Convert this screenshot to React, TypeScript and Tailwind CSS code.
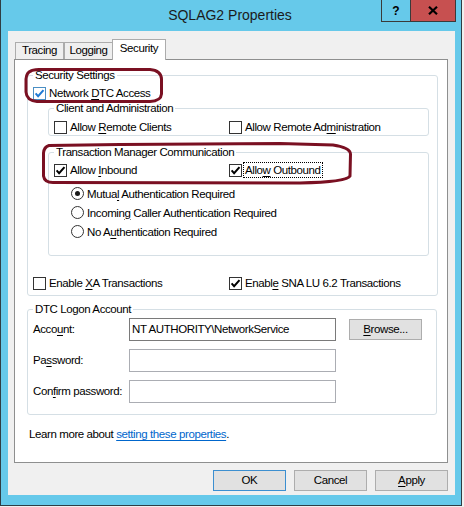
import React from "react";

const U = ({ children }: { children: React.ReactNode }) => (
  <span className="underline decoration-1 underline-offset-[2px]">{children}</span>
);

function CheckBox({ checked = false, hot = false }: { checked?: boolean; hot?: boolean }) {
  return (
    <span
      className={`flex h-[13px] w-[13px] shrink-0 items-center justify-center border bg-white ${
        hot ? "border-[#4a8fc4]" : "border-[#333333]"
      }`}
    >
      {checked && (
        <svg width="11" height="11" viewBox="0 0 11 11">
          <path
            d="M1.6 5.4L4.1 8.2L9.5 2.1"
            fill="none"
            stroke={hot ? "#1f7ad4" : "#000000"}
            strokeWidth="2"
          />
        </svg>
      )}
    </span>
  );
}

function Radio({ on = false }: { on?: boolean }) {
  return (
    <span className="flex h-[13px] w-[13px] shrink-0 items-center justify-center rounded-full border border-[#333333] bg-white">
      {on && <span className="h-[5px] w-[5px] rounded-full bg-[#1a1a1a]" />}
    </span>
  );
}

function Option({
  checked,
  hot,
  focus,
  children,
}: {
  checked?: boolean;
  hot?: boolean;
  focus?: boolean;
  children: React.ReactNode;
}) {
  return (
    <label className="flex h-[16px] items-center gap-[1px]">
      <CheckBox checked={checked} hot={hot} />
      <span
        className={`border px-[1px] leading-[14px] ${
          focus ? "border-dotted border-black" : "border-transparent"
        }`}
      >
        {children}
      </span>
    </label>
  );
}

function RadioRow({ on, children }: { on?: boolean; children: React.ReactNode }) {
  return (
    <label className="flex h-[19px] items-center gap-[3px]">
      <Radio on={on} />
      <span className="leading-[14px]">{children}</span>
    </label>
  );
}

function Group({
  title,
  className = "",
  children,
}: {
  title: string;
  className?: string;
  children: React.ReactNode;
}) {
  return (
    <fieldset className={`rounded-[3px] border border-[#d5dfe5] ${className}`}>
      <legend className="ml-[5px] px-[2px] leading-[14px]">{title}</legend>
      {children}
    </fieldset>
  );
}

function Field({ value = "", dark = false }: { value?: string; dark?: boolean }) {
  return (
    <div
      className={`flex h-[23px] w-[207px] items-center border bg-white px-[2px] ${
        dark ? "border-[#7a7a7a]" : "border-[#abadb3]"
      }`}
    >
      {value}
    </div>
  );
}

function Button({ children, primary = false }: { children: React.ReactNode; primary?: boolean }) {
  return (
    <button
      className={`flex h-[21px] w-[73px] items-center justify-center border bg-[#e1e1e1] ${
        primary ? "border-[#3c8fd0]" : "border-[#adadad]"
      }`}
    >
      {children}
    </button>
  );
}

export default function App() {
  return (
    <div className="relative h-[507px] w-[464px] overflow-hidden bg-[#f0f0f0] font-['Liberation_Sans',Arial,sans-serif] text-[11.5px] tracking-[-0.4px] text-black">
      <div className="flex h-[506px] w-[462px] flex-col border-x border-b border-[#2f3d44] bg-[#66c9ea]">
        {/* title bar */}
        <div className="flex h-[31px] shrink-0">
          <div className="flex-1 pl-[78px] pt-[6px] text-center text-[14px] leading-[18px] tracking-normal text-[#1b1b1b]">
            SQLAG2 Properties
          </div>
          <div className="flex h-[22px] w-[29px] items-center justify-center border-b border-l border-[#3a3a3a] text-[12px] font-bold tracking-normal">
            ?
          </div>
          <div className="flex h-[22px] w-[46px] items-center justify-center border-x border-b border-[#3a3a3a] bg-[#c75050]">
            <svg width="10" height="9" viewBox="0 0 10 9">
              <path d="M1 0.8L9 8.2M9 0.8L1 8.2" stroke="#000" strokeWidth="2.2" />
            </svg>
          </div>
          <div className="w-[5px]" />
        </div>

        {/* client */}
        <div className="ml-[7px] flex h-[464px] w-[447px] flex-col bg-[#f0f0f0] pt-[8px]">
          <div className="ml-[7px] flex h-[20px] items-end">
            <div className="flex h-[17px] w-[49px] items-center justify-center border-x border-t border-[#acacac] bg-[#efefef]">
              Tracing
            </div>
            <div className="flex h-[17px] w-[49px] items-center justify-center border-x border-t border-[#acacac] bg-[#efefef]">
              Logging
            </div>
            <div className="relative z-10 -mb-px -ml-px flex h-[21px] w-[54px] items-center justify-center border-x border-t border-[#acacac] bg-white pb-[2px]">
              Security
            </div>
          </div>

          <div className="ml-[6px] flex h-[404px] w-[434px] flex-col border border-[#8e8f8f] bg-white pl-[12px] pt-[8px]">
            <Group title="Security Settings" className="w-[411px]">
              <div className="flex flex-col pb-[4px] pl-[5px] pr-[8px]">
                <div className="mt-[3px]">
                  <Option checked hot>
                    Network <U>D</U>TC Access
                  </Option>
                </div>

                <Group title="Client and Administration" className="ml-[15px]">
                  <div className="mt-[4px] grid grid-cols-[175px_1fr] pl-[5px]">
                    <Option>
                      Allow <U>R</U>emote Clients
                    </Option>
                    <Option>
                      Allow Remote Ad<U>m</U>inistration
                    </Option>
                  </div>
                </Group>

                <Group title="Transaction Manager Communication" className="ml-[15px] mt-[9px]">
                  <div className="mt-[3px] grid grid-cols-[175px_1fr] pl-[5px]">
                    <Option checked>
                      Allow <U>I</U>nbound
                    </Option>
                    <Option checked focus>
                      Allo<U>w</U> Outbound
                    </Option>
                  </div>
                  <div className="mt-[6px] flex flex-col pb-[14px] pl-[22px]">
                    <RadioRow on>
                      Mutua<U>l</U> Authentication Required
                    </RadioRow>
                    <RadioRow>
                      Incomin<U>g</U> Caller Authentication Required
                    </RadioRow>
                    <RadioRow>
                      No A<U>u</U>thentication Required
                    </RadioRow>
                  </div>
                </Group>

                <div className="mt-[19px] grid grid-cols-[196px_1fr]">
                  <Option>
                    Enable <U>X</U>A Transactions
                  </Option>
                  <Option checked>
                    Enabl<U>e</U> SNA LU 6.2 Transactions
                  </Option>
                </div>
              </div>
            </Group>

            <Group title="DTC Logon Account" className="mt-[6px] w-[410px]">
              <div className="mt-[2px] flex flex-col gap-[8px] pb-[11px] pl-[5px]">
                <div className="flex items-center">
                  <span className="w-[96px]">
                    Acco<U>u</U>nt:
                  </span>
                  <Field value="NT AUTHORITY\NetworkService" dark />
                  <div className="ml-[13px]">
                    <Button>
                      <U>B</U>rowse...
                    </Button>
                  </div>
                </div>
                <div className="flex items-center">
                  <span className="w-[96px]">
                    Pa<U>s</U>sword:
                  </span>
                  <Field />
                </div>
                <div className="flex items-center">
                  <span className="w-[96px]">
                    Con<U>f</U>irm password:
                  </span>
                  <Field />
                </div>
              </div>
            </Group>

            <p className="ml-[2px] mt-[12px] leading-[14px]">
              Learn more about{" "}
              <a className="text-[#0066cc] underline underline-offset-[2px]">setting these properties</a>.
            </p>
          </div>

          <div className="mt-[7px] flex justify-end gap-[8px] pr-[7px]">
            <Button primary>OK</Button>
            <Button>Cancel</Button>
            <Button>
              <U>A</U>pply
            </Button>
          </div>
        </div>
      </div>

      {/* annotation marks drawn over the screenshot */}
      <svg className="pointer-events-none absolute left-0 top-0" width="464" height="507">
        <path
          d="M31 71Q26.5 72.5 26 79L26 92Q26.5 100.5 37 101.5L150 101.5Q161 101 161.5 94L161.5 79Q161 70.5 150 69.5L39 69.5Q32 69.8 31 71Z"
          fill="none"
          stroke="#7a1022"
          strokeWidth="3"
        />
        <path
          d="M49 145.5Q44 147 43.5 153L43.5 176Q44.5 182.5 53 182.5L300 183Q347 182 350 176L350.5 154Q350 147.5 333 145L280 143.5L120 144.5Z"
          fill="none"
          stroke="#7a1022"
          strokeWidth="3"
        />
      </svg>
    </div>
  );
}
